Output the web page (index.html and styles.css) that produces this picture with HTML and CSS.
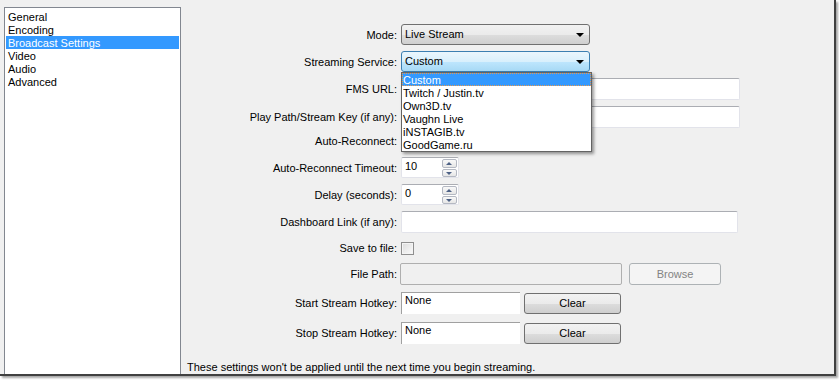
FILE: index.html
```html
<!DOCTYPE html>
<html lang="en">
<head>
  <meta charset="UTF-8" />
  <title>Broadcast Settings</title>
  <link rel="stylesheet" href="styles.css">
</head>
<body>

  <div class="window">
    <ul class="nav-list">
      <li>General</li>
      <li>Encoding</li>
      <li class="selected">Broadcast Settings</li>
      <li>Video</li>
      <li>Audio</li>
      <li>Advanced</li>
    </ul>

    <div class="settings">
      <div class="row">
        <label>Mode:</label>
        <div class="combo"><span>Live Stream</span><i class="arrow"></i></div>
      </div>

      <div class="row">
        <label>Streaming Service:</label>
        <div class="combo combo-open">
          <span>Custom</span><i class="arrow"></i>
          <ul class="dropdown">
            <li class="active">Custom</li>
            <li>Twitch / Justin.tv</li>
            <li>Own3D.tv</li>
            <li>Vaughn Live</li>
            <li>iNSTAGIB.tv</li>
            <li>GoodGame.ru</li>
          </ul>
        </div>
      </div>

      <div class="row">
        <label>FMS URL:</label>
        <div class="textbox wide"></div>
      </div>

      <div class="row">
        <label>Play Path/Stream Key (if any):</label>
        <div class="textbox wide"></div>
      </div>

      <div class="row row-small">
        <label>Auto-Reconnect:</label>
        <div class="checkbox"></div>
      </div>

      <div class="row row-spin">
        <label>Auto-Reconnect Timeout:</label>
        <div class="spinbox">
          <span>10</span>
          <div class="spin-buttons"><b class="up"></b><b class="down"></b></div>
        </div>
      </div>

      <div class="row">
        <label>Delay (seconds):</label>
        <div class="spinbox">
          <span>0</span>
          <div class="spin-buttons"><b class="up"></b><b class="down"></b></div>
        </div>
      </div>

      <div class="row">
        <label>Dashboard Link (if any):</label>
        <div class="textbox dashboard"></div>
      </div>

      <div class="row row-check">
        <label>Save to file:</label>
        <div class="checkbox"></div>
      </div>

      <div class="row row-path">
        <label>File Path:</label>
        <div class="inline">
          <div class="textbox disabled"></div>
          <button class="btn btn-disabled">Browse</button>
        </div>
      </div>

      <div class="row row-hotkey">
        <label>Start Stream Hotkey:</label>
        <div class="inline inline-tight">
          <div class="hotkey">None</div>
          <button class="btn">Clear</button>
        </div>
      </div>

      <div class="row row-hotkey-2">
        <label>Stop Stream Hotkey:</label>
        <div class="inline inline-tight">
          <div class="hotkey">None</div>
          <button class="btn">Clear</button>
        </div>
      </div>

      <p class="note">These settings won't be applied until the next time you begin streaming.</p>
    </div>
  </div>

</body>
</html>
```

FILE: styles.css
```css
/* Reset */
* {
  box-sizing: border-box;
  margin: 0;
  padding: 0;
}

body {
  font-family: 'Liberation Sans', Arial, sans-serif;
  font-size: 11px;
  color: #000;
  background: #fff;
  width: 839px;
  height: 380px;
  overflow: hidden;
}

.window {
  width: 836px;
  height: 376px;
  background: #f0f0f0;
  border-right: 2px solid #404040;
  border-bottom: 2px solid #404040;
  box-shadow: 2px 2px 2px rgba(0, 0, 0, 0.35);
  display: flex;
  align-items: flex-start;
}

/* Left list */
.nav-list {
  list-style: none;
  margin: 7px 0 0 4px;
  width: 177px;
  height: 367px;
  background: #fff;
  border: 1px solid #828790;
  border-bottom: none;
  padding: 2px 1px 1px;
}

.nav-list li {
  height: 13px;
  line-height: 14px;
  padding-left: 2px;
  white-space: nowrap;
}

.nav-list .selected {
  background: #3399ff;
  color: #fff;
}

/* Form */
.settings {
  flex: 1;
  padding-top: 24px;
  display: flex;
  flex-direction: column;
  gap: 6px;
}

.row {
  display: grid;
  grid-template-columns: 216px 1fr;
  column-gap: 4px;
  align-items: center;
  min-height: 21px;
}

.row label {
  text-align: right;
  white-space: nowrap;
}

.row-small { min-height: 14px; }
.row-spin { margin-top: 3px; }
.row-check { min-height: 16px; margin-top: 1px; }
.row-path { margin-top: 1px; }
.row-hotkey { margin-top: 1px; }
.row-hotkey-2 { margin-top: 2px; }

/* Combobox */
.combo {
  position: relative;
  width: 189px;
  height: 21px;
  border: 1px solid #707070;
  border-radius: 3px;
  background: linear-gradient(#f2f2f2 0%, #ebebeb 50%, #dddddd 51%, #cfcfcf 100%);
  padding-left: 3px;
  line-height: 19px;
}

.combo-open {
  border-color: #3c7fb1;
  background: linear-gradient(#eaf6fd 0%, #d9f0fc 50%, #bee6fd 51%, #a7d9f5 100%);
}

.arrow {
  position: absolute;
  right: 5px;
  top: 8px;
  width: 0;
  height: 0;
  border-left: 4px solid transparent;
  border-right: 4px solid transparent;
  border-top: 4px solid #000;
}

.dropdown {
  position: absolute;
  top: 20px;
  left: -1px;
  width: 191px;
  list-style: none;
  background: #fff;
  border: 1px solid #646464;
  box-shadow: 2px 2px 3px rgba(0, 0, 0, 0.4);
  z-index: 5;
}

.dropdown li {
  height: 13px;
  line-height: 14px;
  padding-left: 1px;
  white-space: nowrap;
}

.dropdown .active {
  background: #3399ff;
  color: #fff;
  outline: 1px dotted #e89a50;
  outline-offset: -1px;
}

/* Text boxes */
.textbox {
  height: 22px;
  background: #fff;
  border: 1px solid #e2e3ea;
  border-top-color: #abadb3;
  border-radius: 2px;
}

.wide { width: 339px; }
.dashboard { width: 337px; }

.textbox.disabled {
  width: 222px;
  margin-left: -1px;
  background: #f0f0f0;
  border: 1px solid #afafaf;
}

.inline {
  display: flex;
  align-items: center;
  gap: 7px;
}

.inline-tight { gap: 4px; }

/* Buttons */
.btn {
  font-family: inherit;
  font-size: 11px;
  color: #000;
  width: 97px;
  height: 21px;
  border: 1px solid #707070;
  border-radius: 3px;
  background: linear-gradient(#f2f2f2 0%, #ebebeb 50%, #dddddd 51%, #cfcfcf 100%);
}

.btn-disabled {
  width: 92px;
  height: 22px;
  color: #838383;
  border-color: #adb2b5;
  background: #f4f4f4;
}

/* Hotkey field */
.hotkey {
  width: 119px;
  height: 22px;
  background: #fff;
  border-top: 1px solid #a0a0a0;
  border-left: 1px solid #a0a0a0;
  padding: 1px 0 0 3px;
  line-height: 12px;
}

/* Spin box */
.spinbox {
  position: relative;
  width: 58px;
  height: 21px;
  background: #fff;
  border: 1px solid #e2e3ea;
  border-top-color: #abadb3;
  border-radius: 2px;
  padding: 1px 0 0 3px;
  line-height: 14px;
}

.spin-buttons {
  position: absolute;
  right: 1px;
  top: 1px;
  width: 15px;
  display: flex;
  flex-direction: column;
  gap: 1px;
}

.spin-buttons b {
  position: relative;
  height: 8.5px;
  border: 1px solid #b4b8c2;
  border-radius: 2px;
  background: linear-gradient(#f9f9f9, #e6e6e6);
}

.spin-buttons b::after {
  content: "";
  position: absolute;
  left: 3px;
  top: 2px;
  border-left: 3.5px solid transparent;
  border-right: 3.5px solid transparent;
}

.spin-buttons .up::after {
  border-bottom: 3px solid #4d6185;
}

.spin-buttons .down::after {
  border-top: 3px solid #4d6185;
}

/* Checkbox */
.checkbox {
  width: 13px;
  height: 13px;
  border: 1px solid #8f8f8f;
  background: linear-gradient(135deg, #dcdcdc, #fbfbfb);
  box-shadow: inset 0 0 0 1px #f4f4f4;
}

.note {
  margin: 11px 0 0 6px;
  white-space: nowrap;
}
```
